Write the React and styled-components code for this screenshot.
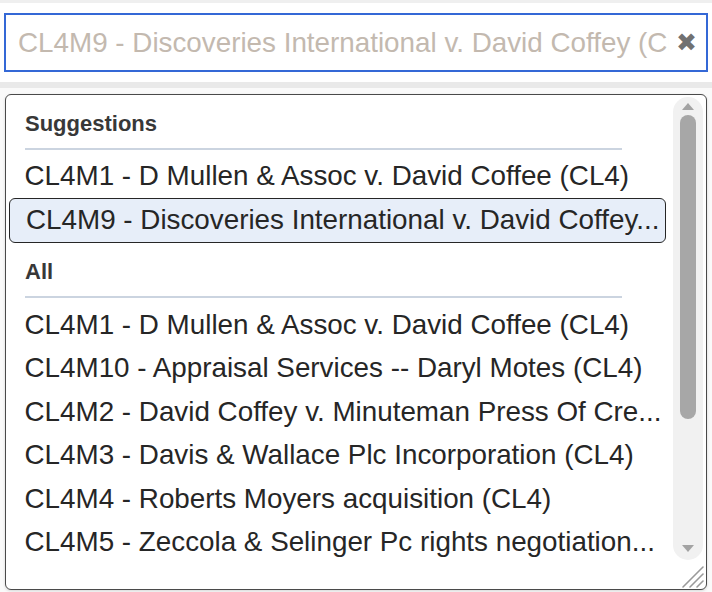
import React from 'react';
import styled, { createGlobalStyle } from 'styled-components';

const GlobalStyle = createGlobalStyle`
  html, body {
    margin: 0;
    padding: 0;
    background: #ffffff;
  }
  body {
    font-family: "Liberation Sans", Arial, sans-serif;
  }
`;

// Page frame
const Page = styled.div`
  width: 712px;
  height: 592px;
  overflow: hidden;
  background: #ffffff;
`;

const TopStrip = styled.div`
  height: 3px;
  background: #efefef;
`;

const SearchArea = styled.div`
  padding: 10px 4px 10px 4px;
`;

const SearchBox = styled.div`
  height: 55px;
  border: 2px solid #3468d6;
  background: #fff;
  display: flex;
  align-items: center;
  padding: 0 9px 0 12px;
`;

const SearchInput = styled.input`
  flex: 1;
  min-width: 0;
  border: none;
  outline: none;
  background: transparent;
  padding: 0;
  font-family: "Liberation Sans", Arial, sans-serif;
  font-size: 27.8px;
  color: #c3b9af;
`;

const ClearButton = styled.span`
  font-family: "DejaVu Sans", sans-serif;
  font-size: 25px;
  color: #717171;
  line-height: 1;
  margin-left: 7px;
`;

const Band = styled.div`
  height: 6px;
  background: #e9e9e9;
`;

const Behind = styled.div`
  position: relative;
  height: 504px;
  background: #fafafa;
`;

// Dropdown popup
const Dropdown = styled.div`
  position: absolute;
  left: 5px;
  top: 6px;
  width: 702px;
  height: 496px;
  box-sizing: border-box;
  border: 1px solid #4a4a4a;
  border-radius: 6px;
  background: #fff;
  box-shadow: 0 1px 3px rgba(0, 0, 0, 0.15);
  display: flex;
  overflow: hidden;
`;

const List = styled.div`
  flex: 1;
  min-width: 0;
  overflow: hidden;
`;

const GroupHeader = styled.div`
  height: 55px;
  box-sizing: border-box;
  padding-top: 4px;
  margin-left: 19px;
  width: 597px;
  border-bottom: 2px solid #cbd4e0;
  display: flex;
  align-items: center;
  font-size: 22px;
  font-weight: 600;
  color: #383838;
`;

const Items = styled.div`
  padding-top: ${(p) => p.$gap}px;
`;

const Item = styled.div`
  height: ${(p) => (p.$selected ? 45.5 : 43.5)}px;
  box-sizing: border-box;
  margin: 0 7px 0 3px;
  padding: 0 2px 0 ${(p) => (p.$selected ? 16 : 14.5)}px;
  border: 1.5px solid ${(p) => (p.$selected ? '#262626' : 'transparent')};
  border-radius: 6px;
  background: ${(p) => (p.$selected ? '#e7eef9' : 'transparent')};
  display: flex;
  align-items: center;
  font-size: 27.8px;
  color: #262626;
  white-space: nowrap;
  overflow: hidden;
`;

// Scrollbar
const ScrollColumn = styled.div`
  width: 30px;
  margin-right: 3px;
  padding-top: 2px;
  display: flex;
  flex-direction: column;
  align-items: center;
`;

const Track = styled.div`
  width: 30px;
  height: 463px;
  background: #f1f1f1;
  border-radius: 15px;
  display: flex;
  flex-direction: column;
  align-items: center;
  padding-top: 6px;
  box-sizing: border-box;
`;

const Arrow = styled.div`
  width: 0;
  height: 0;
  border-left: 6px solid transparent;
  border-right: 6px solid transparent;
  ${(p) =>
    p.$down
      ? 'border-top: 7px solid #a3a3a3; margin-top: auto; margin-bottom: 8px;'
      : 'border-bottom: 7px solid #a3a3a3;'}
`;

const Thumb = styled.div`
  width: 16px;
  height: 304px;
  margin-top: 5px;
  border-radius: 8px;
  background: #a7a7a7;
`;

const Grip = styled.svg`
  align-self: flex-end;
  margin-top: 3px;
  margin-right: -2px;
`;

// long titles are shown shortened, as the list does
const suggestions = [
  'CL4M1 - D Mullen & Assoc v. David Coffee (CL4)',
  'CL4M9 - Discoveries International v. David Coffey...',
];

const all = [
  'CL4M1 - D Mullen & Assoc v. David Coffee (CL4)',
  'CL4M10 - Appraisal Services -- Daryl Motes (CL4)',
  'CL4M2 - David Coffey v. Minuteman Press Of Cre...',
  'CL4M3 - Davis & Wallace Plc Incorporation (CL4)',
  'CL4M4 - Roberts Moyers acquisition (CL4)',
  'CL4M5 - Zeccola & Selinger Pc rights negotiation...',
];

export default function App() {
  const selected = 1;
  return (
    <Page>
      <GlobalStyle />
      <TopStrip />
      <SearchArea>
        <SearchBox>
          <SearchInput
            readOnly
            value="CL4M9 - Discoveries International v. David Coffey (CL4)"
          />
          <ClearButton>✖</ClearButton>
        </SearchBox>
      </SearchArea>
      <Band />
      <Behind>
        <Dropdown>
          <List>
            <GroupHeader>Suggestions</GroupHeader>
            <Items $gap={4}>
              {suggestions.map((s, i) => (
                <Item key={s} $selected={i === selected}>
                  {s}
                </Item>
              ))}
            </Items>
            <GroupHeader>All</GroupHeader>
            <Items $gap={5}>
              {all.map((s) => (
                <Item key={s}>{s}</Item>
              ))}
            </Items>
          </List>
          <ScrollColumn>
            <Track>
              <Arrow />
              <Thumb />
              <Arrow $down />
            </Track>
            <Grip width="26" height="26" viewBox="0 0 26 26">
              <g stroke="#9a9a9a" strokeWidth="1.6" strokeLinecap="round">
                <line x1="24" y1="4" x2="4" y2="24" />
                <line x1="24" y1="11" x2="11" y2="24" />
                <line x1="24" y1="18" x2="18" y2="24" />
              </g>
            </Grip>
          </ScrollColumn>
        </Dropdown>
      </Behind>
    </Page>
  );
}
